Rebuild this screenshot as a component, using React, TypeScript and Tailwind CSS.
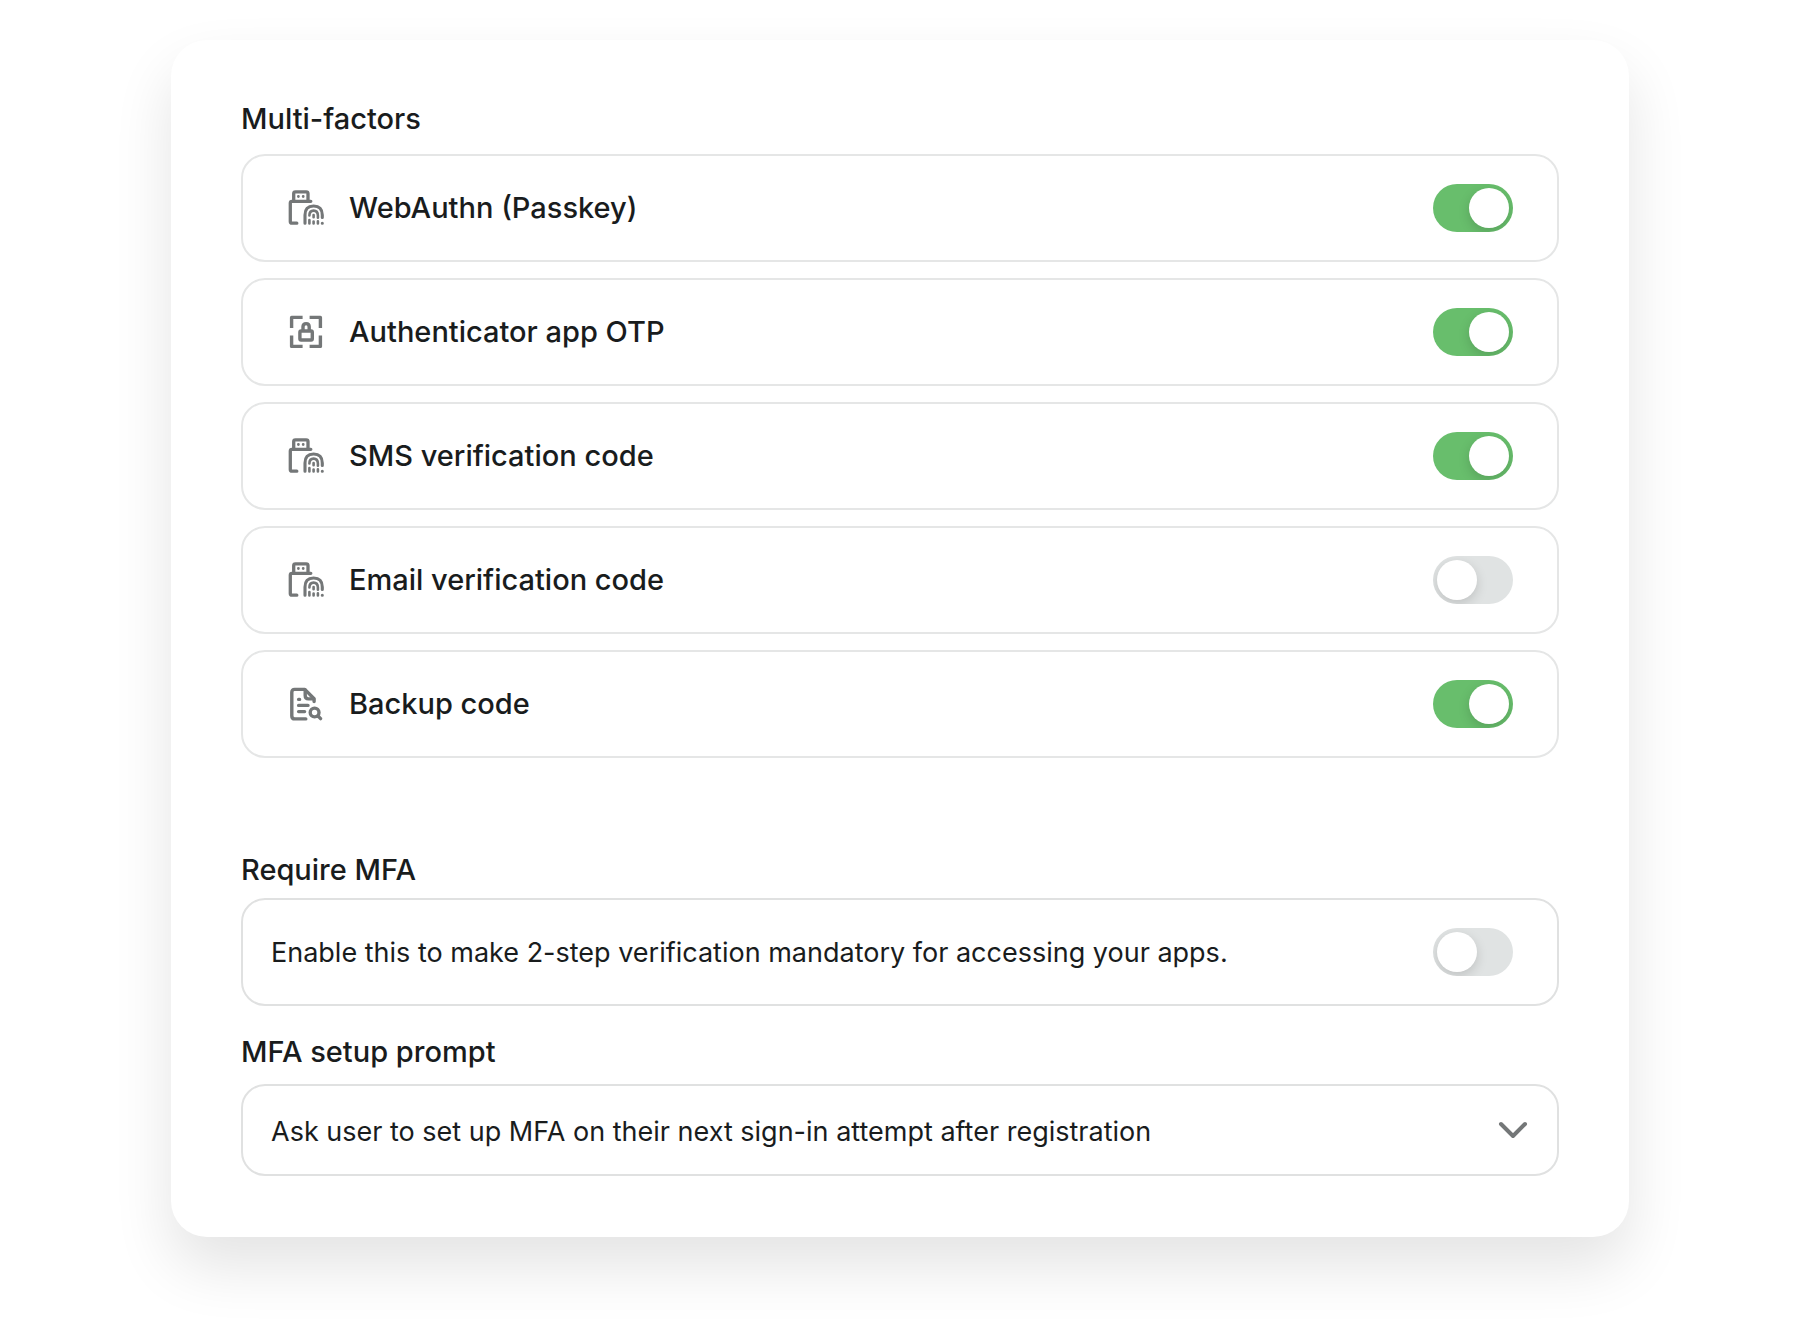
import { useState } from "react";
import type { ReactNode } from "react";

function PasskeyIcon() {
  return (
    <svg viewBox="0 0.6 40 40" className="h-10 w-10 shrink-0" fill="none" stroke="#747778" strokeWidth="3.3" strokeLinecap="round" strokeLinejoin="round">
      <path d="M6.7 13.6V6.2Q6.7 4.4 8.5 4.4H19.2Q21 4.4 21 6.2V13.6" />
      <path d="M23.8 13.9H5Q3.3 13.9 3.3 15.6V34Q3.3 35.8 5 35.8H9.8" />
      <path d="M11.4 9V9.1M16.2 9V9.1" strokeWidth="2.8" />
      <path d="M18 35.8V27.6Q18 18.6 26.6 18.6T35.3 27.6V30M35.3 35.8V35.9" strokeWidth="3.1" />
      <path d="M22.4 28Q22.4 23.2 26.6 23.2T30.9 28V30.4M22.4 32.6V36M30.9 34V36" strokeWidth="2.6" />
      <path d="M26.6 27.6V29.8M26.6 34.2V36" strokeWidth="2.6" />
    </svg>
  );
}

function AuthenticatorIcon() {
  return (
    <svg viewBox="0 0.4 40 40" className="h-10 w-10 shrink-0" fill="none" stroke="#747778" strokeWidth="3.4" strokeLinejoin="round">
      <path d="M4.6 16.4V5.8H15.6M22.6 5.8H33.4V16.4M33.4 24V34.8H22.6M15.6 34.8H4.6V24" />
      <rect x="12.9" y="19.4" width="12.4" height="9" rx="1.2" />
      <path d="M16 19V15.2Q16 12 19.1 12T22.2 15.2V19" />
    </svg>
  );
}

function BackupIcon() {
  return (
    <svg viewBox="0 0 40 40" className="h-10 w-10 shrink-0" fill="none" stroke="#747778" strokeWidth="3.4" strokeLinecap="round" strokeLinejoin="round">
      <path d="M18.8 34.9H7.6Q4.8 34.9 4.8 32.1V8.2Q4.8 5.4 7.6 5.4H17.8L27.1 14.7V17.6" />
      <path d="M18.2 6V11.6Q18.2 14.9 21.4 14.9H26.6" />
      <path d="M11.6 15.4H12.6M11.6 21.4H21M11.6 27.6H17.6" />
      <circle cx="27.6" cy="28.5" r="4.4" />
      <path d="M31 32L33.6 34.6" />
    </svg>
  );
}

type SwitchProps = {
  id: string;
  checked: boolean;
  onChange: () => void;
};

function Switch({ id, checked, onChange }: SwitchProps) {
  return (
    <input
      id={id}
      type="checkbox"
      role="switch"
      checked={checked}
      onChange={onChange}
      className="flex h-12 w-20 shrink-0 cursor-pointer appearance-none items-center overflow-hidden rounded-full bg-[#e0e3e3] p-1 transition-colors before:h-10 before:w-10 before:rounded-full before:bg-white before:shadow-[0_4px_12px_rgba(0,0,0,0.15)] before:transition-transform before:content-[''] checked:bg-[#68be6c] checked:before:translate-x-8"
    />
  );
}

type Factor = {
  id: string;
  label: string;
  icon: ReactNode;
};

const factors: Factor[] = [
  { id: "webauthn", label: "WebAuthn (Passkey)", icon: <PasskeyIcon /> },
  { id: "totp", label: "Authenticator app OTP", icon: <AuthenticatorIcon /> },
  { id: "sms", label: "SMS verification code", icon: <PasskeyIcon /> },
  { id: "email", label: "Email verification code", icon: <PasskeyIcon /> },
  { id: "backup", label: "Backup code", icon: <BackupIcon /> },
];

export default function App() {
  const [enabled, setEnabled] = useState<Record<string, boolean>>({
    webauthn: true,
    totp: true,
    sms: true,
    email: false,
    backup: true,
    required: false,
  });

  const toggle = (id: string) => () => {
    setEnabled((prev) => ({ ...prev, [id]: !prev[id] }));
  };

  return (
    <div className="min-h-screen bg-white px-6 py-10 font-['Inter',sans-serif] text-[#191c1d]">
      <main className="mx-auto max-w-[1458px] rounded-[36px] bg-white px-[70px] py-[61px] shadow-[0_30px_60px_rgba(0,0,0,0.11)]">
        {/* Factors */}
        <section>
          <h2 className="text-[29px] leading-9 font-medium">Multi-factors</h2>
          <ul className="mt-[17px] flex flex-col gap-4">
            {factors.map((factor) => (
              <li key={factor.id} className="flex h-[108px] items-center gap-[22px] rounded-3xl border-2 border-[#e5e6e6] px-11">
                {factor.icon}
                <label htmlFor={factor.id} className="flex-1 text-[29px] leading-9 font-medium">
                  {factor.label}
                </label>
                <Switch id={factor.id} checked={enabled[factor.id]} onChange={toggle(factor.id)} />
              </li>
            ))}
          </ul>
        </section>

        {/* Require MFA */}
        <section className="mt-[94px]">
          <h2 className="text-[29px] leading-9 font-medium">Require MFA</h2>
          <div className="mt-2.5 flex h-[108px] items-center rounded-3xl border-2 border-[#e0e1e1] pr-11 pl-7">
            <label htmlFor="required" className="flex-1 pt-0.5 text-[27px] leading-9">
              Enable this to make 2-step verification mandatory for accessing your apps.
            </label>
            <Switch id="required" checked={enabled.required} onChange={toggle("required")} />
          </div>
        </section>

        {/* Setup prompt */}
        <section className="mt-7">
          <label htmlFor="prompt" className="block text-[29px] leading-9 font-medium">
            MFA setup prompt
          </label>
          <div className="relative mt-3.5">
            <select
              id="prompt"
              className="block h-[92px] w-full cursor-pointer appearance-none rounded-3xl border-2 border-[#e0e1e1] bg-white pt-1 pr-20 pl-7 text-[27px] leading-9"
            >
              <option>Ask user to set up MFA on their next sign-in attempt after registration</option>
            </select>
            <svg viewBox="0 0 32 20" className="pointer-events-none absolute top-9 right-[30px] h-5 w-8" fill="none" stroke="#747778" strokeWidth="4" strokeLinecap="round" strokeLinejoin="round">
              <path d="M4 4L16 16L28 4" />
            </svg>
          </div>
        </section>
      </main>
    </div>
  );
}
